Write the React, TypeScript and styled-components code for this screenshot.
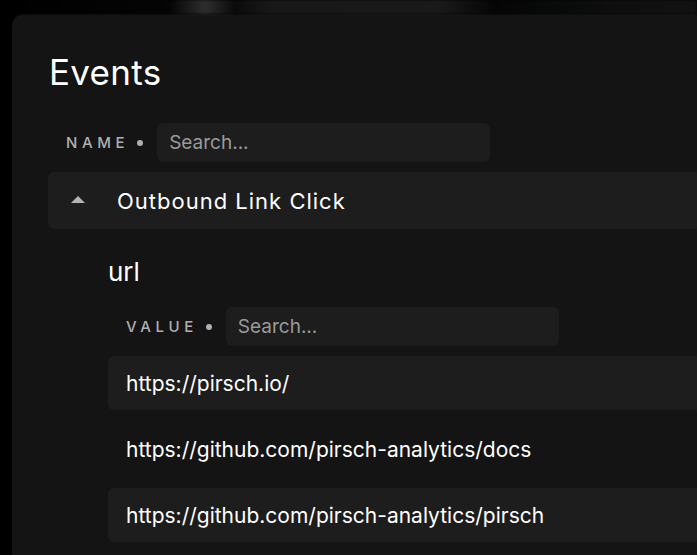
import React from 'react'
import styled, { createGlobalStyle } from 'styled-components'

const GlobalStyle = createGlobalStyle`
  html, body {
    margin: 0;
    padding: 0;
    background: #000;
    font-family: Inter, "Noto Sans", sans-serif;
    overflow: hidden;
  }
`

const Page = styled.div`
  width: 697px;
  height: 555px;
  overflow: hidden;
  display: flex;
  flex-direction: column;
  background: #000;
`

// blurred strip of whatever sits behind the card
const Backdrop = styled.div`
  height: 14px;
  flex-shrink: 0;
  background: linear-gradient(
    90deg,
    #000 0px,
    #050505 170px,
    #2e2e2e 205px,
    #0a0a0a 235px,
    #181818 270px,
    #1a1a1a 440px,
    #050505 495px,
    #070a08 540px,
    #0e0f0e 620px,
    #121212 697px
  );
  filter: blur(1px);
`

const Card = styled.section`
  margin-left: 12px;
  width: 720px;
  flex: 1;
  background: #141414;
  border-radius: 12px 12px 0 0;
  padding: 38px 0 0 36px;
  box-sizing: border-box;
`

const Title = styled.h1`
  margin: 0 0 31px 1px;
  font-size: 35px;
  font-weight: 400;
  letter-spacing: 0.3px;
  color: #fff;
  line-height: 40px;
`

const FilterRow = styled.div<{ $indent: number }>`
  display: flex;
  align-items: center;
  gap: 14px;
  margin-left: ${({ $indent }) => $indent}px;
`

const FilterLabel = styled.span`
  font-size: 15px;
  font-weight: 500;
  letter-spacing: 4.6px;
  color: #b0b0b0;
  text-transform: uppercase;
  display: flex;
  align-items: center;
  gap: 8px;

  &::after {
    content: '';
    width: 6px;
    height: 6px;
    border-radius: 50%;
    background: #b0b0b0;
  }
`

const SearchInput = styled.input`
  width: 333px;
  height: 39px;
  box-sizing: border-box;
  border: none;
  outline: none;
  border-radius: 6px;
  background: #1d1d1d;
  padding: 0 12px;
  font-family: inherit;
  font-size: 19px;
  color: #ddd;

  &::placeholder {
    color: #9a9a9a;
  }
`

const EventHeader = styled.div`
  margin-top: 10px;
  height: 57px;
  display: flex;
  align-items: center;
  gap: 32px;
  padding-left: 23px;
  background: #1d1d1d;
  border-radius: 6px 0 0 6px;
  font-size: 22px;
  letter-spacing: 1px;
  font-weight: 400;
  color: #fff;
`

const Caret = styled.span`
  width: 0;
  height: 0;
  border-left: 7px solid transparent;
  border-right: 7px solid transparent;
  border-bottom: 7px solid #b4b4b4;
  margin-bottom: 2px;
`

const Meta = styled.div`
  margin-left: 60px;
  margin-top: 28px;
`

const MetaKey = styled.h2`
  margin: 0 0 20px;
  font-size: 26px;
  font-weight: 400;
  color: #fff;
  line-height: 30px;
`

const ValueList = styled.div`
  margin-top: 10px;
  display: flex;
  flex-direction: column;
  gap: 12px;
`

const ValueRow = styled.div<{ $striped: boolean }>`
  height: 54px;
  display: flex;
  align-items: center;
  padding-left: 18px;
  border-radius: 6px 0 0 6px;
  background: ${({ $striped }) => ($striped ? '#1d1d1d' : 'transparent')};
  font-size: 21px;
  font-weight: 400;
  color: #fff;
`

const values = [
  'https://pirsch.io/',
  'https://github.com/pirsch-analytics/docs',
  'https://github.com/pirsch-analytics/pirsch',
]

const App: React.FC = () => {
  return (
    <>
      <GlobalStyle />
      <Page>
        <Backdrop />
        <Card>
          <Title>Events</Title>
          <FilterRow $indent={18}>
            <FilterLabel>Name</FilterLabel>
            <SearchInput placeholder="Search..." />
          </FilterRow>
          <EventHeader>
            <Caret />
            Outbound Link Click
          </EventHeader>
          <Meta>
            <MetaKey>url</MetaKey>
            <FilterRow $indent={18}>
              <FilterLabel>Value</FilterLabel>
              <SearchInput placeholder="Search..." />
            </FilterRow>
            <ValueList>
              {values.map((v, i) => (
                <ValueRow key={v} $striped={i % 2 === 0}>
                  {v}
                </ValueRow>
              ))}
            </ValueList>
          </Meta>
        </Card>
      </Page>
    </>
  )
}

export default App
